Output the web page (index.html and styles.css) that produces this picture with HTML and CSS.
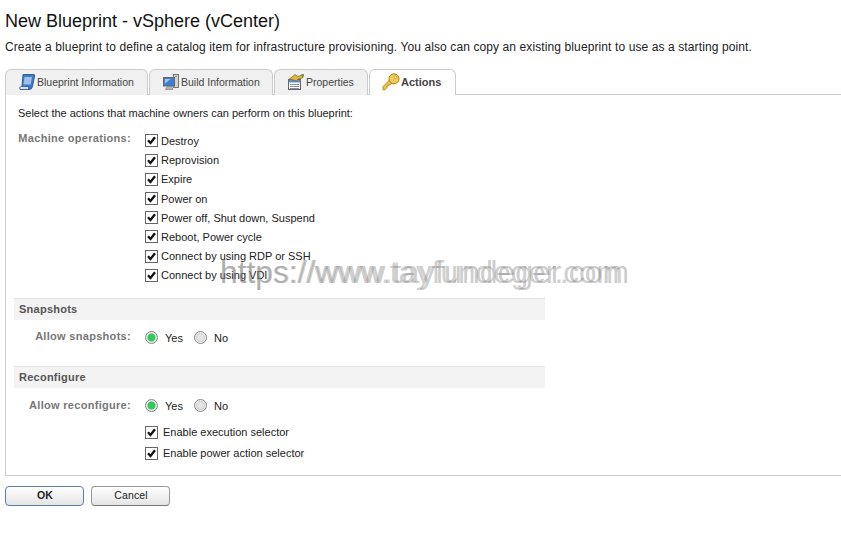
FILE: index.html
```html
<!DOCTYPE html>
<html lang="en">
<head>
  <meta charset="UTF-8" />
  <title>New Blueprint - vSphere (vCenter)</title>
  <link rel="stylesheet" href="styles.css">
</head>
<body>
  <svg class="defs" width="0" height="0">
    <symbol id="tick" viewBox="0 0 11 11">
      <path d="M2 5.200 L4.500 8 L9 2.300" fill="none" stroke="#111" stroke-width="2.300"/>
    </symbol>
  </svg>

  <h1>New Blueprint - vSphere (vCenter)</h1>
  <p class="intro">Create a blueprint to define a catalog item for infrastructure provisioning. You also can copy an existing blueprint to use as a starting point.</p>

  <div class="tabs">
    <div class="tab tab-blueprint">
      <svg width="18" height="18" viewBox="0 0 18 18">
        <path d="M5 1.500 H16 Q17 1.500 16.600 3 L14.500 13.500 Q14 16.500 11 16.500 H2 Q4 15.500 4 13 Z" fill="#3f78c4" stroke="#2a5597" stroke-width=".9"/>
        <path d="M6.500 4 H14 L12.700 11.500 H5.500 Z" fill="#9dbfe9"/>
        <path d="M2 16.500 Q.8 13.500 3.500 13.500 H11 Q10 15 11 16.500 Z" fill="#d7e5f7" stroke="#2a5597" stroke-width=".8"/>
      </svg>
      Blueprint Information
    </div>
    <div class="tab tab-build">
      <svg width="18" height="18" viewBox="0 0 18 18">
        <rect x="11.500" y="1.500" width="5" height="13" fill="#d2d2d2" stroke="#777"/>
        <rect x="1.500" y="4.500" width="11" height="8.500" fill="#3d7fd0" stroke="#666"/>
        <path d="M3 6 H8.500 L3 10.500 Z" fill="#a4ccf2"/>
        <rect x="13" y="3" width="2" height="1" fill="#5a5"/>
        <path d="M3.500 16.500 H11 L9.500 13.500 H5 Z" fill="#b5b5b5" stroke="#777" stroke-width=".6"/>
      </svg>
      Build Information
    </div>
    <div class="tab tab-props">
      <svg width="18" height="18" viewBox="0 0 18 18">
        <rect x="1.500" y="6.500" width="12" height="10" fill="#fff" stroke="#666"/>
        <rect x="2" y="7" width="11" height="2.500" fill="#5b8fd0"/>
        <path d="M3 11.500 H12 M3 13.500 H12 M3 15.500 H12" stroke="#8a8aaa"/>
        <path d="M2.500 6 L8 1.500 L11 3.500 L16 1.500 L15.500 5 L11 6 L10 8 Z" fill="#e3b23c" stroke="#7a6a20" stroke-width=".7"/>
        <path d="M13.500 2 L17 1 L16.500 4.500 Z" fill="#5a9a3a"/>
      </svg>
      Properties
    </div>
    <div class="tab tab-active">
      <svg width="18" height="18" viewBox="0 0 18 18">
        <path d="M1 13.500 L7.500 7 L10.500 9.800 L8 12 L7 11.500 L6.500 13 L5 13 L5 14.500 L3 16.800 L1 16.800 Z" fill="#f0c040" stroke="#b07f10" stroke-width=".8"/>
        <circle cx="12" cy="5.800" r="5" fill="#f5cc55" stroke="#b07f10"/>
        <circle cx="13.500" cy="4.300" r="1.300" fill="#fff2b8" stroke="#b07f10" stroke-width=".6"/>
      </svg>
      Actions
    </div>
  </div>

  <div class="panel">
    <p class="lead">Select the actions that machine owners can perform on this blueprint:</p>

    <div class="field">
      <div class="field-label">Machine operations:</div>
      <div class="checks">
        <div class="check"><span class="box"><svg><use href="#tick"/></svg></span>Destroy</div>
        <div class="check"><span class="box"><svg><use href="#tick"/></svg></span>Reprovision</div>
        <div class="check"><span class="box"><svg><use href="#tick"/></svg></span>Expire</div>
        <div class="check"><span class="box"><svg><use href="#tick"/></svg></span>Power on</div>
        <div class="check"><span class="box"><svg><use href="#tick"/></svg></span>Power off, Shut down, Suspend</div>
        <div class="check"><span class="box"><svg><use href="#tick"/></svg></span>Reboot, Power cycle</div>
        <div class="check"><span class="box"><svg><use href="#tick"/></svg></span>Connect by using RDP or SSH</div>
        <div class="check"><span class="box"><svg><use href="#tick"/></svg></span>Connect by using VDI</div>
      </div>
    </div>

    <div class="section section-snapshots">Snapshots</div>
    <div class="field field-radio">
      <div class="field-label">Allow snapshots:</div>
      <div class="radios">
        <span class="radio radio-on"></span><span class="radio-text">Yes</span>
        <span class="radio"></span><span class="radio-text">No</span>
      </div>
    </div>

    <div class="section section-reconfigure">Reconfigure</div>
    <div class="field field-radio field-reconfigure">
      <div class="field-label">Allow reconfigure:</div>
      <div class="radios">
        <span class="radio radio-on"></span><span class="radio-text">Yes</span>
        <span class="radio"></span><span class="radio-text">No</span>
      </div>
    </div>
    <div class="selectors">
      <div class="check check-wide"><span class="box"><svg><use href="#tick"/></svg></span>Enable execution selector</div>
      <div class="check check-wide"><span class="box"><svg><use href="#tick"/></svg></span>Enable power action selector</div>
    </div>
  </div>

  <div class="buttons">
    <button class="btn btn-primary">OK</button>
    <button class="btn">Cancel</button>
  </div>

  <div class="watermark watermark-back">https://www.tayfundeger.com</div>
  <div class="watermark watermark-front">https://www.tayfundeger.com</div>
</body>
</html>
```

FILE: styles.css
```css
body {
  margin: 0;
  font-family: "Liberation Sans", Arial, sans-serif;
  font-size: 11px;
  color: #222;
  background-color: #fff;
  position: relative;
  height: 542px;
  overflow: hidden;
}

.defs {
  position: absolute;
}

h1 {
  margin: 0;
  padding: 11px 0 0 5px;
  font-size: 18px;
  line-height: 21px;
  font-weight: normal;
  color: #111;
}

.intro {
  margin: 8px 0 0 5px;
  font-size: 12px;
  line-height: 15px;
  letter-spacing: 0.105px;
  color: #222;
}

.tabs {
  display: flex;
  gap: 1px;
  margin: 14px 0 0 5px;
  height: 26px;
}

.tab {
  display: flex;
  align-items: center;
  gap: 1px;
  box-sizing: border-box;
  height: 26px;
  padding: 0 0 2px 12px;
  background-color: #f0f0f0;
  border: 1px solid #ccc;
  border-bottom: none;
  border-radius: 6px 6px 0 0;
  color: #444;
  font-size: 10.5px;
}

.tab-blueprint {
  width: 143px;
}

.tab-build {
  width: 124px;
}

.tab-props {
  width: 94px;
}

.tab-active {
  width: 87px;
  background-color: #fff;
  font-weight: bold;
  font-size: 11px;
  position: relative;
  z-index: 1;
}

.panel {
  box-sizing: border-box;
  height: 382px;
  margin: -1px 0 0 5px;
  padding: 12px 0 0 8px;
  border: 1px solid #ccc;
  border-right: none;
}

.lead {
  margin: 0 0 0 4px;
  line-height: 13px;
  letter-spacing: -0.03px;
  color: #222;
}

.field {
  display: flex;
  margin-top: 11px;
}

.field-label {
  box-sizing: border-box;
  width: 117px;
  text-align: right;
  font-size: 11px;
  font-weight: bold;
  letter-spacing: 0.3px;
  color: #777;
  line-height: 14px;
}

.checks {
  margin-left: 14px;
  padding-top: 0.4px;
}

.check {
  display: flex;
  align-items: center;
  gap: 3px;
  height: 19.2px;
}

.check-wide {
  gap: 5px;
  height: 21px;
}

.box {
  display: block;
  box-sizing: border-box;
  width: 13px;
  height: 13px;
  border: 1px solid #666;
  background-color: #fff;
}

.box svg {
  display: block;
  width: 11px;
  height: 11px;
}

.section {
  width: 531px;
  box-sizing: border-box;
  height: 22px;
  padding-left: 5px;
  background-color: #f3f3f3;
  border-top: 1px solid #e2e2e2;
  font-size: 11px;
  font-weight: bold;
  letter-spacing: 0.25px;
  color: #555;
  line-height: 21px;
}

.section-snapshots {
  margin-top: 13px;
}

.section-reconfigure {
  margin-top: 19px;
}

.field-radio {
  margin-top: 9px;
}

.field-reconfigure .field-label {
  padding-top: 1px;
}

.radios {
  display: flex;
  align-items: center;
  margin-left: 14px;
  height: 18px;
}

.radio {
  display: block;
  box-sizing: border-box;
  width: 13px;
  height: 13px;
  border-radius: 50%;
  border: 1px solid #888;
  background: radial-gradient(circle, #e4e4e4 0 3px, #d0d0d0 4px, #f2f2f2 5px);
}

.radio-on {
  background: radial-gradient(circle, #2ecc5a 0 3.500px, #e8e8e8 4.500px);
}

.radio-text {
  margin: 0 11px 0 7px;
}

.selectors {
  margin: 7px 0 0 131px;
}

.buttons {
  display: flex;
  gap: 7px;
  margin: 10px 0 0 5px;
}

.btn {
  box-sizing: border-box;
  width: 79px;
  height: 20px;
  padding: 0 0 2px 1px;
  font-family: inherit;
  font-size: 10.5px;
  letter-spacing: 0.1px;
  color: #222;
  background: linear-gradient(to bottom, #fff, #e4e4e4);
  border: 1px solid #999;
  border-bottom-color: #777;
  border-radius: 4px;
}

.btn-primary {
  font-weight: bold;
  border-color: #5c7fa8;
}

.watermark {
  position: absolute;
  left: 220px;
  top: 254px;
  line-height: 37px;
  white-space: nowrap;
  pointer-events: none;
}

.watermark-back {
  font-size: 31.5px;
  color: rgba(130, 130, 130, 0.4);
}

.watermark-front {
  font-size: 32px;
  color: rgba(110, 110, 110, 0.35);
}
```
